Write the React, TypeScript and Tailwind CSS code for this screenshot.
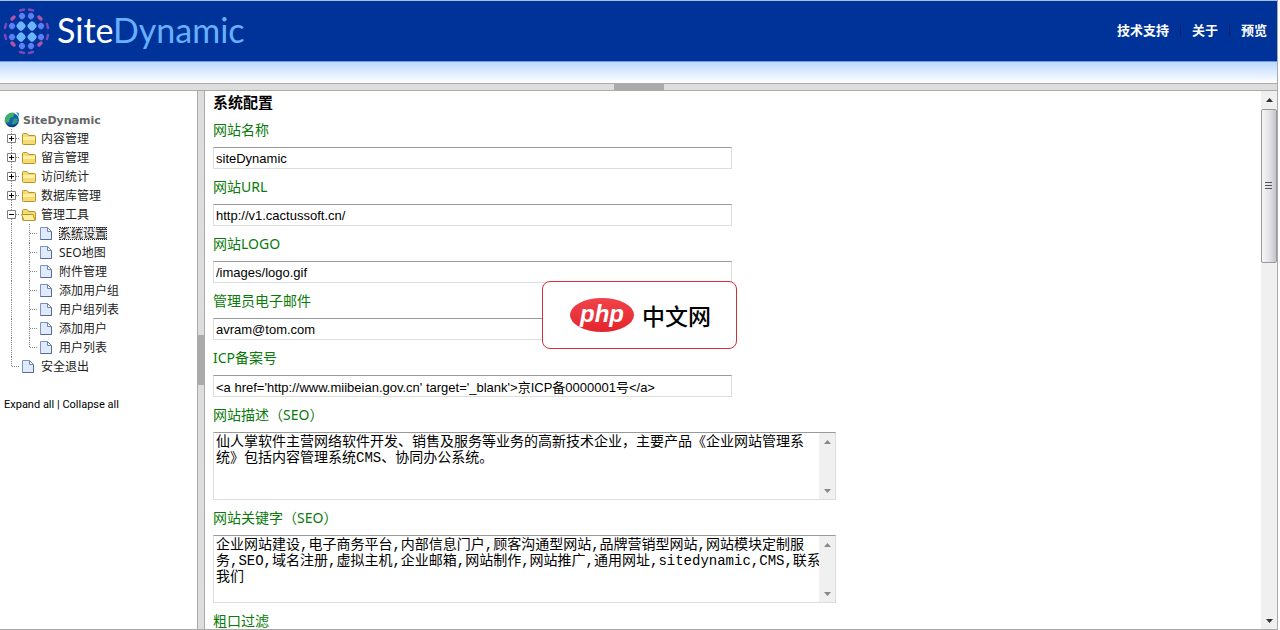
import { useState } from "react";
import clsx from "clsx";

const navLinks = ["技术支持", "关于", "预览"];

type TreeNode = {
  label: string;
  open?: boolean;
  children?: string[];
};

const tree: TreeNode[] = [
  { label: "内容管理", children: [] },
  { label: "留言管理", children: [] },
  { label: "访问统计", children: [] },
  { label: "数据库管理", children: [] },
  {
    label: "管理工具",
    open: true,
    children: ["系统设置", "SEO地图", "附件管理", "添加用户组", "用户组列表", "添加用户", "用户列表"],
  },
  { label: "安全退出" },
];

const fields = [
  { id: "name", label: "网站名称", value: "siteDynamic" },
  { id: "url", label: "网站URL", value: "http://v1.cactussoft.cn/" },
  { id: "logo", label: "网站LOGO", value: "/images/logo.gif" },
  { id: "email", label: "管理员电子邮件", value: "avram@tom.com" },
  {
    id: "icp",
    label: "ICP备案号",
    value: "<a href='http://www.miibeian.gov.cn' target='_blank'>京ICP备0000001号</a>",
  },
];

const areas = [
  {
    id: "description",
    label: "网站描述（SEO）",
    value:
      "仙人掌软件主营网络软件开发、销售及服务等业务的高新技术企业，主要产品《企业网站管理系\n统》包括内容管理系统CMS、协同办公系统。",
  },
  {
    id: "keywords",
    label: "网站关键字（SEO）",
    value:
      "企业网站建设,电子商务平台,内部信息门户,顾客沟通型网站,品牌营销型网站,网站模块定制服\n务,SEO,域名注册,虚拟主机,企业邮箱,网站制作,网站推广,通用网址,sitedynamic,CMS,联系\n我们",
  },
];

const logoDots: { x: number; y: number; r: number; fill: string }[] = [
  { x: 21, y: 25, r: 4, fill: "#6cb4ff" },
  { x: 32, y: 25, r: 4, fill: "#6cb4ff" },
  { x: 21, y: 36, r: 4, fill: "#6cb4ff" },
  { x: 32, y: 36, r: 4, fill: "#6cb4ff" },
  { x: 22, y: 15, r: 3, fill: "#5c80f4" },
  { x: 31, y: 15, r: 3, fill: "#5c80f4" },
  { x: 22, y: 45, r: 3, fill: "#5c80f4" },
  { x: 31, y: 45, r: 3, fill: "#5c80f4" },
  { x: 12, y: 25, r: 3, fill: "#5c80f4" },
  { x: 41, y: 25, r: 3, fill: "#5c80f4" },
  { x: 12, y: 36, r: 3, fill: "#5c80f4" },
  { x: 41, y: 36, r: 3, fill: "#5c80f4" },
];

function GlobeLogo() {
  return (
    <svg width="52" height="60" viewBox="0 0 52 60" aria-hidden="true">
      {logoDots.map((d) => (
        <rect
          key={`${d.x}-${d.y}`}
          x={d.x - d.r}
          y={d.y - d.r}
          width={d.r * 2}
          height={d.r * 2}
          rx="2.5"
          fill={d.fill}
          transform={`rotate(45 ${d.x} ${d.y})`}
        />
      ))}
      <g stroke="#b850a8" strokeWidth="3.5" strokeLinecap="round">
        <path d="M12 18l2-2M41 18l-2-2M12 42l2 2M41 42l-2 2" />
        <g stroke="#7c48bc" strokeWidth="2.5">
          <path d="M20 9.500l4-1M29 8.500l4 1M20 51l4 1M29 52l4-1" />
          <path d="M6 23l-1 4M5 34l1 4M47 23l1 4M48 34l-1 4" />
        </g>
      </g>
    </svg>
  );
}

function EarthIcon() {
  return (
    <svg width="18" height="18" viewBox="0 0 18 18" aria-hidden="true">
      <circle cx="9" cy="9" r="7" fill="#1560a8" />
      <path d="M3 5c3-4 7-4 9-3l-2 4-3 1-1 4-4 1c-1-3 0-5 1-7z" fill="#3fb06a" />
      <path d="M11 7l4 1-1 5-3 2-2-3z" fill="#2a9a86" />
      <path d="M3 12c3 3 8 3 12-1-1 4-4 6-7 5-3 0-4-2-5-4z" fill="#0b3d80" />
      <path d="M13 1l3 1v4z" fill="#2f9ae0" />
    </svg>
  );
}

function FolderIcon({ open }: { open?: boolean }) {
  return (
    <svg width="18" height="19" viewBox="0 0 18 19" className="shrink-0" aria-hidden="true">
      <path
        d="M2.500 5.500q0-1 1-1h3q1 0 1.500 1l.5 1h6q1 0 1 1v7q0 1-1 1h-11q-1 0-1-1z"
        fill="#f6dc70"
        stroke="#b8922c"
      />
      {open ? (
        <path d="M1.500 9.500H13l2 6H4z" fill="#fff0a0" stroke="#b8922c" />
      ) : (
        <path d="M3 8h12v3H3z" fill="#fff0a4" />
      )}
    </svg>
  );
}

function PageIcon() {
  return (
    <svg width="18" height="19" viewBox="0 0 18 19" className="shrink-0" aria-hidden="true">
      <path d="M2.500 3.500h7l4 4v8h-11z" fill="#dfeafc" stroke="#7c92c0" />
      <path d="M9.500 3.500v4h4z" fill="#fff" stroke="#6d83b0" />
      <path d="M13.500 8v7.500h-11" fill="none" stroke="#566a98" />
    </svg>
  );
}

function Lines({ branch, last }: { branch?: boolean; last?: boolean }) {
  return (
    <svg width="18" height="19" viewBox="0 0 18 19" className="shrink-0" aria-hidden="true">
      <path
        d={clsx(last ? "M9.500 0v10" : "M9.500 0v19", branch && "M10 9.500h8")}
        stroke="#888"
        strokeDasharray="1 1"
        fill="none"
      />
    </svg>
  );
}

function Toggle({ open, label, onClick }: { open: boolean; label: string; onClick: () => void }) {
  return (
    <button type="button" aria-label={label} aria-expanded={open} onClick={onClick} className="shrink-0">
      <svg width="18" height="19" viewBox="0 0 18 19" className="block">
        <path d="M9.500 0v19M14 9.500h4" stroke="#888" strokeDasharray="1 1" />
        <path d="M5.500 5.500h8v8h-8z" fill="#fff" stroke="#808080" />
        <path d={open ? "M7 9.500h5" : "M7 9.500h5M9.500 7v5"} stroke="#000" />
      </svg>
    </button>
  );
}

function Sidebar() {
  const [opened, setOpened] = useState<string[]>(tree.filter((n) => n.open).map((n) => n.label));
  const toggle = (label: string) =>
    setOpened((cur) => (cur.includes(label) ? cur.filter((l) => l !== label) : [...cur, label]));

  return (
    <aside className="w-[198px] shrink-0 overflow-hidden border-r border-[#aaa] bg-white pt-[19px] text-[12px] text-[#222]">
      <a
        href="#"
        className="flex h-[19px] items-center gap-[2px] pl-[3px] font-['DejaVu_Sans',sans-serif] text-[11px] leading-[19px] font-bold text-[#666]"
      >
        <EarthIcon />
        <span className="pt-px">SiteDynamic</span>
      </a>
      <ul className="pl-[2px]">
        {tree.map((node) => {
          const open = opened.includes(node.label);
          return (
            <li key={node.label}>
              <div className="flex h-[19px] items-center">
                {node.children ? (
                  <Toggle open={open} label={node.label} onClick={() => toggle(node.label)} />
                ) : (
                  <Lines branch last />
                )}
                {node.children ? <FolderIcon open={open} /> : <PageIcon />}
                <a href="#" className="pl-[3px]">
                  {node.label}
                </a>
              </div>
              {open && node.children && (
                <ul>
                  {node.children.map((child, i) => (
                    <li key={child} className="flex h-[19px] items-center">
                      <Lines />
                      <Lines branch last={i === node.children!.length - 1} />
                      <PageIcon />
                      <a
                        href="#"
                        className={clsx(
                          "ml-[3px] leading-[13px]",
                          child === "系统设置" && "bg-[#eee] outline-1 -outline-offset-1 outline-dotted outline-[#222]"
                        )}
                      >
                        {child}
                      </a>
                    </li>
                  ))}
                </ul>
              )}
            </li>
          );
        })}
      </ul>
      <p className="mt-[20px] pl-1 font-['Roboto',sans-serif] text-[11px] leading-[18px] text-black">
        <a href="#">Expand all</a> | <a href="#">Collapse all</a>
      </p>
    </aside>
  );
}

function Arrow({ down, dark }: { down?: boolean; dark?: boolean }) {
  return (
    <svg width="15" height="17" viewBox="0 0 15 17" aria-hidden="true">
      <path d={down ? "M4 7h7l-3.500 4z" : "M4 11h7l-3.500-4z"} fill={dark ? "#333" : "#888"} />
    </svg>
  );
}

function TextArea({ id, label, value }: { id: string; label: string; value: string }) {
  return (
    <div>
      <label htmlFor={id} className="block text-[14px] leading-[35px] text-[#0a7a0a]">
        {label}
      </label>
      <div className="flex h-[68px] max-w-[623px] border border-[#ddd] border-t-[#999]">
        <textarea
          id={id}
          defaultValue={value}
          className="min-w-0 flex-1 resize-none overflow-hidden bg-white pt-px pl-[2px] font-['Liberation_Mono','Noto_Sans_CJK_SC',monospace] text-[14px] leading-[16px] whitespace-pre text-black outline-none"
        />
        <div className="flex w-[16px] shrink-0 flex-col items-center justify-between bg-[#f0f0f0]">
          <Arrow />
          <Arrow down />
        </div>
      </div>
    </div>
  );
}

function SettingsForm() {
  return (
    <form className="min-w-0 flex-1 overflow-hidden pl-[8px]">
      <h1 className="pt-[2px] text-[15px] leading-[19px] font-bold text-black">系统配置</h1>
      {fields.map((f) => (
        <div key={f.id}>
          <label htmlFor={f.id} className="block text-[14px] leading-[35px] text-[#0a7a0a]">
            {f.label}
          </label>
          <input
            id={f.id}
            type="text"
            defaultValue={f.value}
            className="block h-[22px] w-full max-w-[519px] border border-[#ddd] border-t-[#999] bg-white px-[2px] font-['Liberation_Sans','Noto_Sans_CJK_SC',sans-serif] text-[13px] text-black outline-none"
          />
        </div>
      ))}
      {areas.map((a) => (
        <TextArea key={a.id} {...a} />
      ))}
      <p className="text-[14px] leading-[35px] text-[#0a7a0a]">粗口过滤</p>
    </form>
  );
}

function Scrollbar() {
  return (
    <div className="flex w-[16px] shrink-0 flex-col items-center bg-[#f0f0f0]">
      <Arrow dark />
      <div className="mt-px flex h-[154px] w-full items-center justify-center rounded-xs border border-[#999] bg-linear-to-r from-[#f6f6f6] via-[#e4e4e8] to-[#c4c4cc]">
        <svg width="8" height="8" viewBox="0 0 8 8" aria-hidden="true">
          <path d="M0 .5h7M0 3.500h7M0 6.500h7" stroke="#555" />
        </svg>
      </div>
      <div className="flex-1" />
      <Arrow down dark />
    </div>
  );
}

function Watermark() {
  return (
    <div className="absolute top-[281px] left-[542px] flex h-[68px] w-[195px] items-center gap-[7px] rounded-lg border border-[#d0303c] bg-white pl-[27px]">
      <svg width="65" height="36" viewBox="0 0 65 36" aria-label="php">
        <defs>
          <linearGradient id="php" x1="0" y1="0" x2="0" y2="1">
            <stop offset="0" stopColor="#f0444a" />
            <stop offset="1" stopColor="#e4242c" />
          </linearGradient>
        </defs>
        <ellipse cx="32" cy="18" rx="32" ry="17" fill="url(#php)" />
        <text
          x="32"
          y="25"
          textAnchor="middle"
          fill="#fff"
          fontFamily="Liberation Sans, sans-serif"
          fontSize="24"
          fontWeight="bold"
          fontStyle="italic"
        >
          php
        </text>
      </svg>
      <span className="pt-[2px] text-[23px] leading-none font-medium text-black">中文网</span>
    </div>
  );
}

export default function App() {
  return (
    <div className="relative h-screen overflow-hidden bg-white pr-[2px] font-['Noto_Sans','Noto_Sans_CJK_SC',sans-serif]">
      <div className="flex h-full flex-col border-r border-b border-[#aaa]">
        <header className="flex h-[61px] shrink-0 items-center justify-between border-t border-[#a8c0e8] bg-[#003399] pr-[10px]">
          <div className="flex items-center gap-[5px]">
            <GlobeLogo />
            <span className="pb-[3px] font-['Lato',sans-serif] text-[34px] leading-none font-normal text-white">
              Site<span className="text-[#66b0ff]">Dynamic</span>
            </span>
          </div>
          <nav className="flex items-center gap-[11px] text-[13px] font-bold text-white">
            {navLinks.map((link, i) => (
              <div key={link} className="flex items-center gap-[11px]">
                {i > 0 && <span className="h-[12px] w-px bg-[#1a1a6e]" />}
                <a href="#">{link}</a>
              </div>
            ))}
          </nav>
        </header>
        <div className="h-[22px] shrink-0 border-t border-[#6f9be8] bg-linear-to-b from-[#bcd8ff] to-white" />
        <div className="flex h-[8px] shrink-0 justify-center border-y border-[#aaa] bg-[#ddd]">
          <div className="w-[50px] bg-[#aaa]" />
        </div>
        <div className="flex min-h-0 flex-1">
          <Sidebar />
          <div className="flex w-[6px] shrink-0 items-center bg-[#ddd]">
            <div className="h-[50px] w-full bg-[#aaa]" />
          </div>
          <main className="flex min-w-0 flex-1 border-l border-[#aaa]">
            <SettingsForm />
            <Scrollbar />
          </main>
        </div>
      </div>
      <Watermark />
    </div>
  );
}
